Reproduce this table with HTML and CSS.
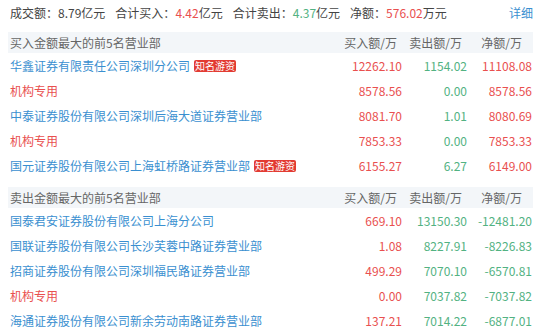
FILE: index.html
```html
<!DOCTYPE html>
<html>
<head>
<meta charset="utf-8">
<link rel="stylesheet" href="styles.css">
</head>
<body>
<div class="wrap">
  <div class="summary">
    <span class="item">成交额：<span>8.79</span>亿元</span>
    <span class="item">合计买入：<span class="up">4.42</span>亿元</span>
    <span class="item">合计卖出：<span class="down">4.37</span>亿元</span>
    <span class="item">净额：<span class="up">576.02</span>万元</span>
    <a class="more">详细</a>
  </div>

  <div class="table">
    <div class="head">
      <span class="name">买入金额最大的前5名营业部</span>
      <span class="num h1">买入额/万</span>
      <span class="num h2">卖出额/万</span>
      <span class="num h3">净额/万</span>
    </div>
    <div class="row"><span class="name"><span class="link">华鑫证券有限责任公司深圳分公司</span><span class="tag">知名游资</span></span><span class="num up">12262.10</span><span class="num down">1154.02</span><span class="num up">11108.08</span></div>
    <div class="row"><span class="name"><span class="org">机构专用</span></span><span class="num up">8578.56</span><span class="num down">0.00</span><span class="num up">8578.56</span></div>
    <div class="row"><span class="name"><span class="link">中泰证券股份有限公司深圳后海大道证券营业部</span></span><span class="num up">8081.70</span><span class="num down">1.01</span><span class="num up">8080.69</span></div>
    <div class="row"><span class="name"><span class="org">机构专用</span></span><span class="num up">7853.33</span><span class="num down">0.00</span><span class="num up">7853.33</span></div>
    <div class="row"><span class="name"><span class="link">国元证券股份有限公司上海虹桥路证券营业部</span><span class="tag">知名游资</span></span><span class="num up">6155.27</span><span class="num down">6.27</span><span class="num up">6149.00</span></div>
  </div>

  <div class="table second">
    <div class="head">
      <span class="name">卖出金额最大的前5名营业部</span>
      <span class="num h1">买入额/万</span>
      <span class="num h2">卖出额/万</span>
      <span class="num h3">净额/万</span>
    </div>
    <div class="row"><span class="name"><span class="link">国泰君安证券股份有限公司上海分公司</span></span><span class="num up">669.10</span><span class="num down">13150.30</span><span class="num down">-12481.20</span></div>
    <div class="row"><span class="name"><span class="link">国联证券股份有限公司长沙芙蓉中路证券营业部</span></span><span class="num up">1.08</span><span class="num down">8227.91</span><span class="num down">-8226.83</span></div>
    <div class="row"><span class="name"><span class="link">招商证券股份有限公司深圳福民路证券营业部</span></span><span class="num up">499.29</span><span class="num down">7070.10</span><span class="num down">-6570.81</span></div>
    <div class="row"><span class="name"><span class="org">机构专用</span></span><span class="num up">0.00</span><span class="num down">7037.82</span><span class="num down">-7037.82</span></div>
    <div class="row"><span class="name"><span class="link">海通证券股份有限公司新余劳动南路证券营业部</span></span><span class="num up">137.21</span><span class="num down">7014.22</span><span class="num down">-6877.01</span></div>
  </div>
</div>
</body>
</html>
```

FILE: styles.css
```css
html, body {
  margin: 0;
  padding: 0;
  background: #ffffff;
}
body {
  font-family: "Noto Sans CJK SC", "Noto Sans", sans-serif;
  font-size: 12px;
  color: #333333;
}
.wrap {
  width: 525px;
  padding: 0 17px 0 8px;
}
.summary {
  display: flex;
  align-items: center;
  height: 24px;
  padding-left: 2px;
  margin-bottom: 8px;
  gap: 10px;
  color: #444444;
}
.more {
  margin-left: auto;
  color: #3a8fd0;
}
.up { color: #e9504f; }
.down { color: #52b282; }
.table {
  display: flex;
  flex-direction: column;
}
.second {
  margin-top: 9px;
}
.head {
  display: flex;
  align-items: center;
  height: 21px;
  background: #f3f6f9;
  color: #666666;
  padding: 0 1px 0 2px;
}
.row {
  display: flex;
  align-items: center;
  height: 25px;
  padding: 0 1px 0 2px;
}
.name {
  flex: 1;
  display: flex;
  align-items: center;
  white-space: nowrap;
}
.num {
  width: 65px;
  text-align: right;
  white-space: nowrap;
}
.head .h1, .head .h2 { padding-right: 5px; width: 60px; }
.head .h3 { padding-right: 10px; width: 55px; }
.link { color: #3a8fd0; }
.org { color: #e9504f; }
.tag {
  margin-left: 4px;
  background: #e23b32;
  color: #ffffff;
  font-size: 10px;
  line-height: 12px;
  height: 12px;
  padding: 0 1px;
  border-radius: 2px;
}
```
